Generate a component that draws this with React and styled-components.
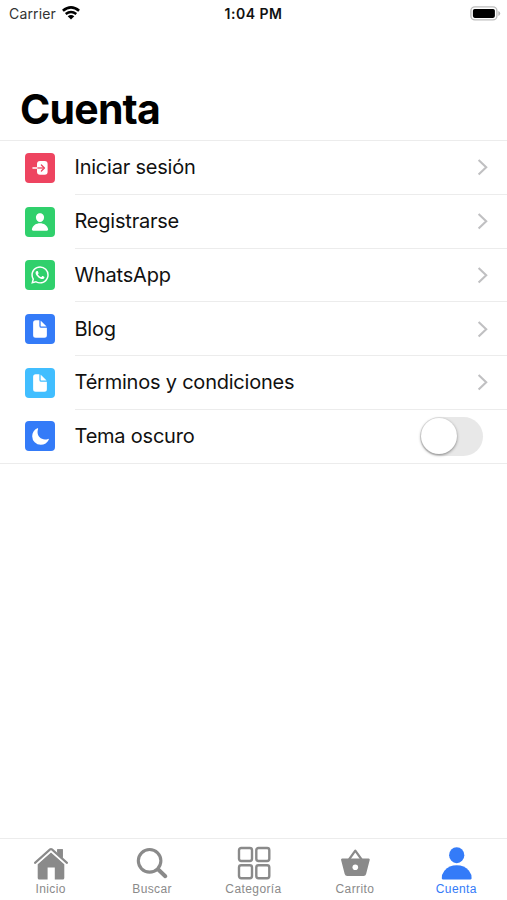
import React, { useState } from "react";
import styled, { createGlobalStyle } from "styled-components";
import { IoDocument, IoLogoWhatsapp, IoMoon, IoPerson } from "react-icons/io5";

const COLORS = {
  primary: "#347bf8",
  muted: "#8a8a8a",
  line: "#ececec",
};

const LoginIcon = () => (
  <svg width="18" height="18" viewBox="0 0 18 18" fill="none">
    <rect x="6" y="2" width="10.6" height="13.8" rx="3" fill="#fff" />
    <path d="M6 9H13.2" stroke="#ee4460" strokeWidth="1.3" />
    <path d="M1.9 9H6" stroke="#fff" strokeWidth="1.3" strokeLinecap="round" />
    <path
      d="M10.4 6L13.4 9L10.4 12"
      stroke="#ee4460"
      strokeWidth="1.3"
      strokeLinecap="round"
      strokeLinejoin="round"
    />
  </svg>
);

const HomeIcon = () => (
  <svg width="36" height="34" viewBox="0 0 36 34" fill="currentColor">
    <path d="M18 6.6L31.3 18.2V32Q31.3 33.6 29.7 33.6H21.8V21.6H14.6V33.6H6.3Q4.7 33.6 4.7 32V18.2Z" />
    <path d="M24.2 3.2H29.8V14L24.2 9Z" />
    <path
      d="M2 17.4L17.1 3.9Q18 3.1 18.9 3.9L34 17.4"
      fill="none"
      stroke="#fff"
      strokeWidth="4"
    />
    <path d="M24.2 3.2H29.8V12.6L24.2 8Z" />
    <path
      d="M2 16.9L17.1 3.4Q18 2.6 18.9 3.4L34 16.9"
      fill="none"
      stroke="currentColor"
      strokeWidth="2.1"
      strokeLinecap="round"
    />
  </svg>
);

const SearchIcon = () => (
  <svg width="36" height="34" viewBox="0 0 36 34" fill="none" stroke="currentColor">
    <circle cx="15.6" cy="14.8" r="11.3" strokeWidth="3.1" />
    <path d="M24 23.3L31.3 30.2" strokeWidth="4" strokeLinecap="round" />
  </svg>
);

const GridIcon = () => (
  <svg
    width="36"
    height="34"
    viewBox="0 0 36 34"
    fill="none"
    stroke="currentColor"
    strokeWidth="2.4"
  >
    <rect x="3" y="2" width="13" height="13" rx="2.2" />
    <rect x="20.3" y="2" width="13" height="13" rx="2.2" />
    <rect x="3" y="19.3" width="13" height="13" rx="2.2" />
    <rect x="20.3" y="19.3" width="13" height="13" rx="2.2" />
  </svg>
);

const BasketIcon = () => (
  <svg width="36" height="34" viewBox="0 0 36 34">
    <path
      d="M12 13.5L18.3 4.6L24.6 13.5"
      fill="none"
      stroke="currentColor"
      strokeWidth="2.2"
      strokeLinejoin="round"
    />
    <path
      d="M5.1 12.4H31.7Q33.1 12.4 32.7 13.9L29.1 28Q28.6 29.9 26.6 29.9H10.2Q8.2 29.9 7.7 28L4.1 13.9Q3.7 12.4 5.1 12.4Z"
      fill="currentColor"
    />
    <circle cx="18.3" cy="21.2" r="2.8" fill="#fff" />
  </svg>
);

const AccountIcon = () => (
  <svg width="36" height="34" viewBox="0 0 36 34" fill="currentColor">
    <ellipse cx="18.7" cy="9.2" rx="7.6" ry="8" />
    <path d="M3.8 32.4Q3.4 28.5 6.4 24.7Q11.2 19.3 18.7 19.3Q26.2 19.3 31 24.7Q34 28.5 33.6 32.4Q33.3 33.4 32.3 33.4H5.1Q4 33.4 3.8 32.4Z" />
  </svg>
);

const WifiIcon = () => (
  <svg width="18" height="14" viewBox="0 0 18 14" fill="none" stroke="#000">
    <path d="M0.9 4.8Q9 -2 17.1 4.8" strokeWidth="2.7" />
    <path d="M3.7 8Q9 3.8 14.3 8" strokeWidth="2.4" />
    <path d="M5.7 10.3Q9 7.5 12.3 10.3L9 13.6Z" fill="#000" stroke="none" />
  </svg>
);

const BatteryIcon = () => (
  <svg width="31" height="15" viewBox="0 0 31 15">
    <rect
      x="0.9"
      y="0.9"
      width="26"
      height="13"
      rx="4"
      fill="#fff"
      stroke="#bdbdbd"
      strokeWidth="1.4"
    />
    <rect x="2.9" y="2.9" width="22" height="9" rx="1.8" fill="#000" />
    <path d="M28.3 5V10Q30.2 9.2 30.2 7.5Q30.2 5.8 28.3 5Z" fill="#b5b5b5" />
  </svg>
);

const ChevronIcon = () => (
  <svg width="12" height="18" viewBox="0 0 12 18" fill="none">
    <path d="M1.6 2L9.2 9.2L1.6 16.4" stroke="#c0c0c2" strokeWidth="2.1" />
  </svg>
);

const items = [
  { label: "Iniciar sesión", color: "#ee4460", icon: <LoginIcon /> },
  { label: "Registrarse", color: "#30d06c", icon: <IoPerson size={20} /> },
  { label: "WhatsApp", color: "#30d06c", icon: <IoLogoWhatsapp size={20} /> },
  { label: "Blog", color: "#347bf8", icon: <IoDocument size={20} /> },
  {
    label: "Términos y condiciones",
    color: "#41beff",
    icon: <IoDocument size={20} />,
  },
];

const tabs = [
  { label: "Inicio", icon: <HomeIcon /> },
  { label: "Buscar", icon: <SearchIcon /> },
  { label: "Categoría", icon: <GridIcon /> },
  { label: "Carrito", icon: <BasketIcon /> },
  { label: "Cuenta", icon: <AccountIcon /> },
];

const App = () => {
  const [currentTab, setCurrentTab] = useState("Cuenta");
  const [dark, setDark] = useState(false);

  return (
    <>
      <GlobalStyle />
      <Wrapper>
        <StatusBar>
          <Carrier>
            <span>Carrier</span>
            <WifiIcon />
          </Carrier>
          <Time>1:04 PM</Time>
          <Battery>
            <BatteryIcon />
          </Battery>
        </StatusBar>
        <Title>Cuenta</Title>
        <List>
          {items.map((item) => (
            <Row key={item.label}>
              <Tile $color={item.color}>{item.icon}</Tile>
              <RowBody>
                <Label>{item.label}</Label>
                <ChevronIcon />
              </RowBody>
            </Row>
          ))}
          <Row>
            <Tile $color="#347bf8">
              <IoMoon size={19} />
            </Tile>
            <RowBody>
              <Label>Tema oscuro</Label>
              <Switch
                role="switch"
                aria-checked={dark}
                $on={dark}
                onClick={() => setDark(!dark)}
              >
                <Knob />
              </Switch>
            </RowBody>
          </Row>
        </List>
        <TabBar>
          {tabs.map((tab) => (
            <Tab
              key={tab.label}
              $active={tab.label === currentTab}
              onClick={() => setCurrentTab(tab.label)}
            >
              {tab.icon}
              <TabLabel>{tab.label}</TabLabel>
            </Tab>
          ))}
        </TabBar>
      </Wrapper>
    </>
  );
};

const GlobalStyle = createGlobalStyle`
  * {
    box-sizing: border-box;
  }

  body {
    margin: 0;
    background: #fff;
    font-family: Inter, "Liberation Sans", sans-serif;
  }
`;

const Wrapper = styled.div`
  display: flex;
  flex-direction: column;
  height: 900px;
  color: #111;
`;

const StatusBar = styled.header`
  display: grid;
  grid-template-columns: 1fr auto 1fr;
  align-items: center;
  height: 27px;
  padding: 0 6px 0 9px;
  font-size: 14px;
`;

const Carrier = styled.div`
  display: flex;
  align-items: center;
  gap: 6px;
  color: #333;
  letter-spacing: 0.15px;

  svg {
    margin-bottom: 2px;
  }
`;

const Time = styled.div`
  margin-right: 3px;
  font-weight: 600;
  letter-spacing: 0.5px;
`;

const Battery = styled.div`
  display: flex;
  justify-content: flex-end;
`;

const Title = styled.h1`
  margin: 58px 0 0;
  padding-left: 20px;
  height: 55px;
  font-size: 41px;
  line-height: 48px;
  font-weight: 700;
  letter-spacing: -0.8px;
  color: #000;
`;

const List = styled.div`
  border-top: 1px solid ${COLORS.line};
  border-bottom: 1px solid ${COLORS.line};
`;

const Row = styled.div`
  display: flex;
  align-items: center;
  gap: 19.5px;
  height: 53.75px;
  padding-left: 25px;

  &:last-child {
    height: 53px;
  }
`;

const Tile = styled.div`
  display: flex;
  align-items: center;
  justify-content: center;
  width: 30px;
  height: 30px;
  border-radius: 4px;
  color: #fff;
  background: ${(props) => props.$color};
`;

const RowBody = styled.div`
  display: flex;
  align-items: center;
  justify-content: space-between;
  flex: 1;
  height: 100%;
  padding-right: 18px;
  border-bottom: 1px solid ${COLORS.line};

  ${Row}:last-child & {
    padding-right: 24px;
    border-bottom: none;
  }
`;

const Label = styled.span`
  font-size: 20px;
  letter-spacing: -0.22px;
`;

const Switch = styled.button`
  display: flex;
  align-items: center;
  justify-content: ${(props) => (props.$on ? "flex-end" : "flex-start")};
  width: 63px;
  height: 39px;
  padding: 1px;
  border: none;
  border-radius: 20px;
  background: ${(props) => (props.$on ? "#30d06c" : "#e8e8e8")};
`;

const Knob = styled.span`
  width: 36px;
  height: 36px;
  border-radius: 50%;
  background: #fff;
  box-shadow: 0 1px 3px rgba(0, 0, 0, 0.45);
`;

const TabBar = styled.nav`
  display: flex;
  height: 62px;
  margin-top: auto;
  border-top: 1px solid ${COLORS.line};
`;

const Tab = styled.button`
  display: flex;
  flex-direction: column;
  align-items: center;
  flex: 1;
  padding: 7px 0 0;
  border: none;
  background: none;
  color: ${(props) => (props.$active ? COLORS.primary : COLORS.muted)};
`;

const TabLabel = styled.span`
  margin-top: 2px;
  font-family: "Liberation Sans", Arial, sans-serif;
  font-size: 12px;
  line-height: 14px;
  letter-spacing: 0.4px;
`;

export default App;
